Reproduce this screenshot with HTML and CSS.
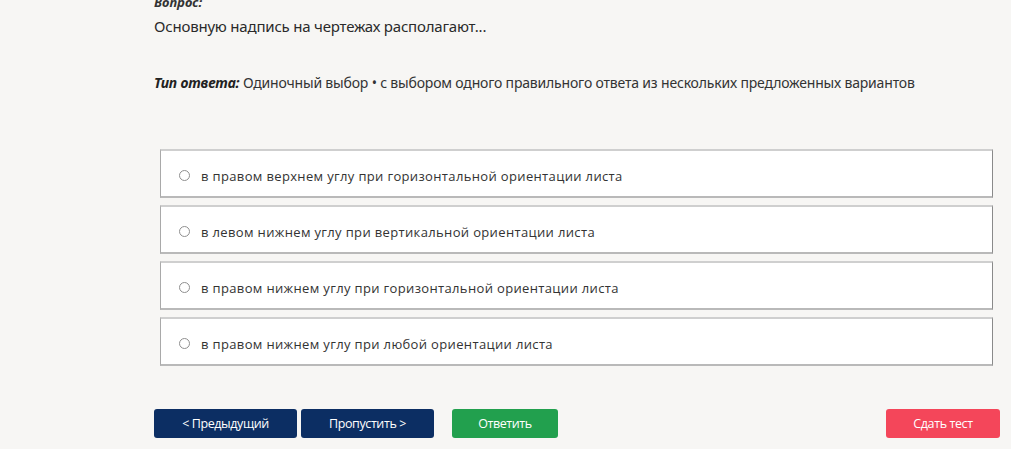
FILE: index.html
```html
<!DOCTYPE html>
<html lang="ru">
<head>
<meta charset="utf-8">
<link rel="stylesheet" href="styles.css">
</head>
<body>
<div class="page">
  <div class="label">Вопрос:</div>
  <div class="question">Основную надпись на чертежах располагают...</div>
  <div class="type"><b><i>Тип ответа:</i></b> Одиночный выбор • с выбором одного правильного ответа из нескольких предложенных вариантов</div>
  <div class="options">
    <label class="option"><span class="radio"></span><span>в правом верхнем углу при горизонтальной ориентации листа</span></label>
    <label class="option"><span class="radio"></span><span>в левом нижнем углу при вертикальной ориентации листа</span></label>
    <label class="option"><span class="radio"></span><span>в правом нижнем углу при горизонтальной ориентации листа</span></label>
    <label class="option"><span class="radio"></span><span>в правом нижнем углу при любой ориентации листа</span></label>
  </div>
  <div class="buttons">
    <button class="btn navy prev">&lt; Предыдущий</button>
    <button class="btn navy skip">Пропустить &gt;</button>
    <button class="btn green answer">Ответить</button>
    <button class="btn red submit">Сдать тест</button>
  </div>
</div>
</body>
</html>
```
FILE: styles.css
```css
html, body {
  margin: 0;
  padding: 0;
  background: #f7f6f4;
  height: 100%;
  overflow: hidden;
}
body {
  font-family: "Open Sans", "Noto Sans", sans-serif;
  color: #222;
}
.page {
  padding-left: 154px;
  width: 846px;
}
.label {
  margin-top: -6px;
  font-size: 13px;
  line-height: 17px;
  font-weight: 700;
  font-style: italic;
  color: #333;
  font-family: "Noto Sans", sans-serif;
}
.question {
  margin-top: 5px;
  font-size: 15px;
  line-height: 20px;
  color: #2a2a2a;
  font-family: "Noto Sans", sans-serif;
  letter-spacing: -0.2px;
}
.type {
  margin-top: 37px;
  font-size: 14px;
  line-height: 19px;
  color: #333;
  font-family: "Noto Sans", sans-serif;
  letter-spacing: -0.18px;
}
.type b {
  color: #222;
}
.options {
  margin-top: 57px;
  margin-left: 6px;
  width: 833px;
  display: flex;
  flex-direction: column;
  gap: 7px;
}
.option {
  display: flex;
  align-items: center;
  gap: 11px;
  height: 41px;
  box-sizing: content-box;
  padding: 4px 0 0 18px;
  background: #fff;
  border-top: 2px solid #cfcfcf;
  border-left: 1px solid #a9a9a9;
  border-right: 1px solid #8a8a8a;
  border-bottom: 2px solid #b9b9b9;
  font-size: 13px;
  color: #333;
  letter-spacing: 0.35px;
}
.radio {
  width: 9px;
  height: 9px;
  border: 1px solid #8f8f8f;
  border-radius: 50%;
  background: #fff;
  flex: none;
}
.buttons {
  margin-top: 43px;
  display: flex;
  align-items: center;
}
.btn {
  height: 29px;
  border: none;
  border-radius: 3px;
  color: #fff;
  font-family: "Open Sans", "Noto Sans", sans-serif;
  font-size: 12.5px;
  letter-spacing: -0.4px;
  padding: 0;
  cursor: pointer;
}
.navy { background: #0c2e63; }
.green { background: #22a04e; }
.red { background: #f4465a; }
.prev { width: 143px; }
.skip { width: 133px; margin-left: 4px; }
.answer { width: 106px; margin-left: 18px; }
.submit { width: 114px; margin-left: auto; }
```
